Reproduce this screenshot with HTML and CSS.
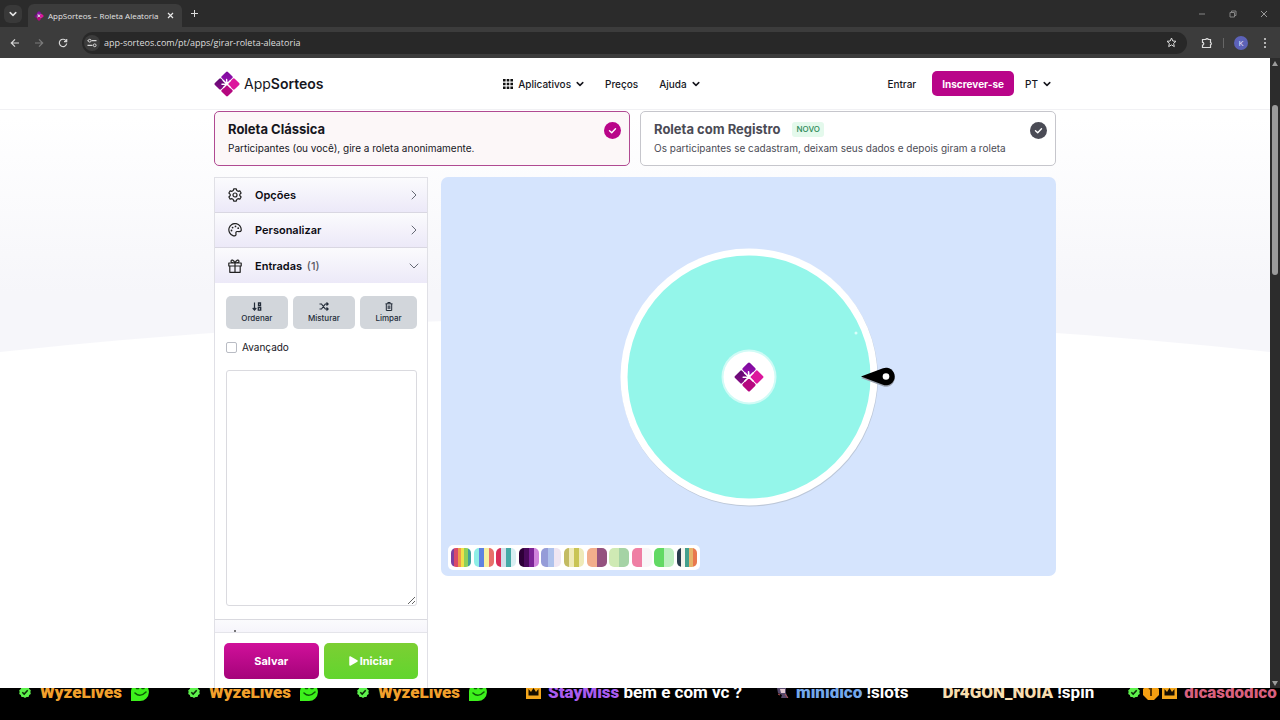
FILE: index.html
```html
<!DOCTYPE html>
<html lang="pt">

<head>
    <meta charset="UTF-8">
    <meta name="viewport" content="width=device-width, initial-scale=1.0">
    <title>AppSorteos – Roleta Aleatoria</title>
    <link rel="stylesheet" href="styles.css">
</head>

<body>

    <!-- Shared icons -->
    <svg class="sprite" aria-hidden="true">
        <defs>
            <linearGradient id="logo-top" x1="0" y1="0" x2="1" y2="1">
                <stop offset="0" stop-color="#7a0a9a" />
                <stop offset="1" stop-color="#9c0fb4" />
            </linearGradient>
            <linearGradient id="logo-left" x1="0" y1="0" x2="1" y2="1">
                <stop offset="0" stop-color="#5c0a70" />
                <stop offset="1" stop-color="#8a0a86" />
            </linearGradient>
        </defs>
        <symbol id="logo" viewBox="0 0 26 26">
            <rect x="8.600" y="1.800" width="8.800" height="8.800" rx="1.300" transform="rotate(45 13 6.200)" fill="url(#logo-top)" />
            <rect x="1.800" y="8.600" width="8.800" height="8.800" rx="1.300" transform="rotate(45 6.200 13)" fill="url(#logo-left)" />
            <rect x="15.400" y="8.600" width="8.800" height="8.800" rx="1.300" transform="rotate(45 19.800 13)" fill="#dc169c" />
            <rect x="8.600" y="15.400" width="8.800" height="8.800" rx="1.300" transform="rotate(45 13 19.800)" fill="#b5077f" />
            <path d="M13 13 12.600 8.500M13 13 9.200 9.400M13 13 8 13.200M13 13 16.500 9.500M13 13 9.500 16.500M13 13 16.500 16.500" stroke="#fff" stroke-width="1.400" stroke-linecap="round" />
        </symbol>
        <symbol id="verified" viewBox="0 0 12 12">
            <path d="M6 0l1.600 1.100 1.900 0 .7 1.800L11.800 4.200 11.400 6l.4 1.900-1.600 1.200-.7 1.800-1.900 0L6 12l-1.600-1.100-1.900 0-.7-1.800L.2 7.900.6 6 .2 4.200l1.600-1.300.7-1.800 1.900 0z" fill="#5df14c" />
            <path d="M3.300 6.200l1.900 1.900 3.500-3.800" fill="none" stroke="#0a2a08" stroke-width="1.500" />
        </symbol>
        <symbol id="smile" viewBox="0 0 18 18">
            <path d="M0 18V8a9 9 0 1 1 9 10z" fill="#3df01c" />
            <path d="M4 10q5 5 11-1M5.500 5.500h2M11 5.500h2" fill="none" stroke="#0c5a06" stroke-width="1.500" stroke-linecap="round" />
        </symbol>
        <symbol id="crown" viewBox="0 0 15 14">
            <path d="M0 2h4l3.500-2L11 2h4v12H0z" fill="#f3a61c" />
            <path d="M2.500 10.500V4L5 7l2.500-4L10 7l2.500-3v6.500z" fill="#140c00" />
        </symbol>
        <symbol id="chevron" viewBox="0 0 8 8">
            <path d="M1.200 2.600 4 5.400 6.800 2.600" fill="none" stroke="currentColor" stroke-width="1.500" stroke-linecap="round" stroke-linejoin="round" />
        </symbol>
        <symbol id="arrow" viewBox="0 0 10 10">
            <path d="M3 1l4 4-4 4" fill="none" stroke="#666a75" stroke-linecap="round" stroke-linejoin="round" />
        </symbol>
        <symbol id="check" viewBox="0 0 17 17">
            <circle cx="8.500" cy="8.500" r="8.500" fill="currentColor" />
            <path d="M5.500 8.800l2.200 2 3.800-4" fill="none" stroke="#fff" stroke-width="1.400" stroke-linecap="round" stroke-linejoin="round" />
        </symbol>
    </svg>

    <!-- Browser -->
    <div class="tab-strip">
        <button class="tab-search" aria-label="Pesquisar guias">
            <svg width="8" height="8"><use href="#chevron" /></svg>
        </button>
        <div class="tab">
            <svg width="10" height="10"><use href="#logo" /></svg>
            <span class="tab-title">AppSorteos – Roleta Aleatoria</span>
            <button aria-label="Fechar guia">
                <svg width="7" height="7" viewBox="0 0 7 7"><path d="M1 1l5 5M6 1L1 6" stroke="#e8e8e8" stroke-width="1.200" /></svg>
            </button>
        </div>
        <button class="tab-new" aria-label="Nova guia">
            <svg width="9" height="9" viewBox="0 0 9 9"><path d="M4.500 1v7M1 4.500h7" stroke="#dcdcdc" /></svg>
        </button>
        <div class="window-buttons">
            <button aria-label="Minimizar"><svg width="8" height="8" viewBox="0 0 8 8"><path d="M1 4h6" stroke="#858585" /></svg></button>
            <button aria-label="Restaurar"><svg width="8" height="8" viewBox="0 0 8 8"><path d="M1 2.500h4.500V7H1zM2.500 2.500V1H7v4.500H5.500" fill="none" stroke="#858585" /></svg></button>
            <button aria-label="Fechar"><svg width="8" height="8" viewBox="0 0 8 8"><path d="M1 1l6 6M7 1L1 7" stroke="#999" /></svg></button>
        </div>
    </div>

    <div class="toolbar">
        <button aria-label="Voltar"><svg width="10" height="10" viewBox="0 0 10 10"><path d="M9 5H1.500M5 1.300L1.300 5 5 8.700" fill="none" stroke="#d8d8d8" stroke-width="1.200" /></svg></button>
        <button aria-label="Avançar"><svg width="10" height="10" viewBox="0 0 10 10"><path d="M1 5h7.500M5 1.300L8.700 5 5 8.700" fill="none" stroke="#7b7b7b" stroke-width="1.200" /></svg></button>
        <button aria-label="Recarregar"><svg width="10" height="10" viewBox="0 0 10 10"><path d="M8.200 3A3.700 3.700 0 1 0 8.700 5.500M8.700 1v2.700H6" fill="none" stroke="#d8d8d8" stroke-width="1.200" /></svg></button>
        <div class="address">
            <span class="site-info">
                <svg width="10" height="10" viewBox="0 0 10 10"><path d="M.5 2.700H1M4.500 2.700H9.500M.5 7.300H5.500" fill="none" stroke="#d8d8d8" stroke-width="1.200" /><circle cx="2.700" cy="2.700" r="1.400" fill="none" stroke="#d8d8d8" /><circle cx="7.700" cy="7.300" r="1.400" fill="none" stroke="#d8d8d8" /></svg>
            </span>
            <input type="text" value="app-sorteos.com/pt/apps/girar-roleta-aleatoria" aria-label="Endereço">
            <button aria-label="Favoritar"><svg width="11" height="11" viewBox="0 0 11 11"><path d="M5.500 1l1.300 3 3.200.3-2.400 2.100.7 3.200-2.800-1.700-2.800 1.700.7-3.200L1 4.300 4.200 4z" fill="none" stroke="#dcdcdc" stroke-linejoin="round" /></svg></button>
        </div>
        <div class="toolbar-end">
            <button aria-label="Extensões"><svg width="12" height="12" viewBox="0 0 12 12"><path d="M1.500 2.500h3.300a1.300 1.300 0 0 1 2.500 0h2.200v3a1.200 1.200 0 0 1 0 2.300v2.700h-8V8a1.300 1.300 0 0 0 0-2.600z" fill="none" stroke="#dcdcdc" stroke-width="1.200" /></svg></button>
            <span class="separator"></span>
            <button class="avatar">K</button>
            <button class="menu" aria-label="Menu"><svg width="4" height="12" viewBox="0 0 4 12"><circle cx="2" cy="2" r="1" fill="#dcdcdc" /><circle cx="2" cy="6" r="1" fill="#dcdcdc" /><circle cx="2" cy="10" r="1" fill="#dcdcdc" /></svg></button>
        </div>
    </div>

    <div class="viewport">
        <div class="page">
            <svg class="page-bg" viewBox="0 0 1270 300" preserveAspectRatio="none" aria-hidden="true">
                <defs>
                    <linearGradient id="bg" x1="0" y1="0" x2="0" y2="1">
                        <stop offset="0.200" stop-color="#fff" />
                        <stop offset="0.800" stop-color="#f6f6fa" />
                    </linearGradient>
                </defs>
                <path d="M0 0H1270V294Q635 226 0 294z" fill="url(#bg)" />
            </svg>

            <header class="header">
                <div class="container header-row">
                    <a href="#" class="brand">
                        <svg width="26" height="26"><use href="#logo" /></svg>
                        <span>App<b>Sorteos</b></span>
                    </a>
                    <nav class="nav">
                        <a href="#">
                            <svg width="10" height="10" viewBox="0 0 10 10" fill="#111"><path d="M0 0h2.600v2.600H0zM3.700 0h2.600v2.600H3.700zM7.400 0H10v2.600H7.400zM0 3.700h2.600v2.600H0zM3.700 3.700h2.600v2.600H3.700zM7.400 3.700H10v2.600H7.400zM0 7.400h2.600V10H0zM3.700 7.400h2.600V10H3.700zM7.400 7.400H10V10H7.400z" /></svg>
                            Aplicativos
                            <svg width="8" height="8"><use href="#chevron" /></svg>
                        </a>
                        <a href="#">Preços</a>
                        <a href="#">Ajuda <svg width="8" height="8"><use href="#chevron" /></svg></a>
                    </nav>
                    <div class="account">
                        <a href="#">Entrar</a>
                        <a href="#" class="btn-signup">Inscrever-se</a>
                        <a href="#">PT <svg width="8" height="8"><use href="#chevron" /></svg></a>
                    </div>
                </div>
            </header>

            <main class="container">
                <div class="modes">
                    <button class="mode active">
                        <span class="mode-text">
                            <strong>Roleta Clássica</strong>
                            <span>Participantes (ou você), gire a roleta anonimamente.</span>
                        </span>
                        <svg width="17" height="17"><use href="#check" /></svg>
                    </button>
                    <button class="mode">
                        <span class="mode-text">
                            <strong>Roleta com Registro <em>NOVO</em></strong>
                            <span>Os participantes se cadastram, deixam seus dados e depois giram a roleta</span>
                        </span>
                        <svg width="17" height="17"><use href="#check" /></svg>
                    </button>
                </div>

                <div class="workspace">
                    <aside class="sidebar">
                        <div class="accordion">
                            <button class="section">
                                <svg width="14" height="14" viewBox="0 0 14 14" fill="none" stroke="#222" stroke-width="1.200" stroke-linejoin="round"><path d="M5.700.8h2.600l.5 1.800 1.200.7 1.800-.5 1.300 2.200L11.800 6.300v1.400l1.300 1.300-1.300 2.200-1.800-.5-1.200.7-.5 1.800H5.700l-.5-1.800-1.200-.7-1.800.5L.9 9l1.300-1.300V6.300L.9 5l1.300-2.200 1.800.5 1.200-.7z" /><circle cx="7" cy="7" r="2" /></svg>
                                <span>Opções</span>
                                <svg class="section-arrow" width="10" height="10"><use href="#arrow" /></svg>
                            </button>
                            <button class="section">
                                <svg width="14" height="14" viewBox="0 0 14 14" fill="none" stroke="#222" stroke-width="1.200"><path d="M5 12.600A6.200 6.200 0 1 1 13.200 7.500C12.800 9 11 8.700 9.500 8.500 7.500 8.300 7.800 10 8 11c.3 1.500-1.500 2.200-3 1.600z" /><g fill="#222" stroke="none"><circle cx="3.500" cy="7.500" r=".9" /><circle cx="4.600" cy="4.600" r=".9" /><circle cx="7.500" cy="3.400" r=".9" /><circle cx="10.200" cy="5.200" r=".9" /></g></svg>
                                <span>Personalizar</span>
                                <svg class="section-arrow" width="10" height="10"><use href="#arrow" /></svg>
                            </button>
                            <button class="section open">
                                <svg width="14" height="14" viewBox="0 0 14 14" fill="none" stroke="#222" stroke-width="1.200"><path d="M.8 4h12.400v3H.8zM1.800 7v6.300h10.400V7M7 4v9.300M7 4C6 1 3 0 3 2.300 3 3.500 4 4 7 4c3 0 4-.5 4-1.700C11 0 8 1 7 4z" stroke-linejoin="round" /></svg>
                                <span>Entradas <small>(1)</small></span>
                                <svg class="section-arrow" width="10" height="10"><use href="#arrow" /></svg>
                            </button>
                            <div class="panel">
                                <div class="tools">
                                    <button>
                                        <svg width="10" height="9" viewBox="0 0 10 9" fill="none" stroke="#222b38" stroke-width="1.200"><path d="M2.500.5v7M.7 6l1.800 2 1.800-2" /><path d="M6.500 1h2v2.500h-2zM6.300 5.500h2.400v2.700H6.300z" stroke-width="1.300" /></svg>
                                        Ordenar
                                    </button>
                                    <button>
                                        <svg width="10" height="9" viewBox="0 0 10 9" fill="none" stroke="#222b38" stroke-width="1.200"><path d="M.5 2H2.500L6.300 7H9M.5 7h2L6.300 2H9M7.500.5L9.200 2 7.500 3.500M7.500 5.500L9.200 7 7.500 8.500" /></svg>
                                        Misturar
                                    </button>
                                    <button>
                                        <svg width="10" height="9" viewBox="0 0 10 9" fill="none" stroke="#222b38"><path d="M1.500 1.800h7M3.800 1.500V.5h2.400v1M2.300 2v6.500h5.400V2M4.200 3.500v3.500M5.800 3.500v3.500" /></svg>
                                        Limpar
                                    </button>
                                </div>
                                <label class="advanced"><input type="checkbox"> Avançado</label>
                                <textarea aria-label="Entradas"></textarea>
                            </div>
                            <div class="section">
                                <svg width="14" height="14" viewBox="0 0 14 14" fill="none" stroke="#222" stroke-width="1.200"><path d="M7 0v3M2 13V7.500h3V13M5 13V4h4v9M9 13V9h3v4" /></svg>
                            </div>
                        </div>
                        <div class="actions">
                            <button class="btn-save">Salvar</button>
                            <button class="btn-start">
                                <svg width="9" height="10" viewBox="0 0 9 10"><path d="M1 1l7 4-7 4z" fill="#fff" stroke="#fff" stroke-width="1.500" stroke-linejoin="round" /></svg>
                                Iniciar
                            </button>
                        </div>
                    </aside>

                    <section class="stage">
                        <svg class="wheel" width="258" height="258" viewBox="0 0 258 258">
                            <circle cx="129.500" cy="130" r="128.500" fill="#bcc7d8" />
                            <circle cx="129" cy="129" r="128.500" fill="#fff" />
                            <circle cx="129" cy="129" r="121.500" fill="#94f6ea" />
                            <circle cx="236" cy="85" r="1.500" fill="#d8fffa" />
                            <circle cx="129" cy="129" r="27.500" fill="#d0fbf6" />
                            <circle cx="129" cy="129" r="25.500" fill="#fff" />
                            <use href="#logo" x="114" y="114" width="30" height="30" />
                            <path d="M241 130L263 121.700a8.800 8.800 0 1 1 0 16.600z" fill="#9aa2af" />
                            <path d="M241 128.500L263 120.200a8.800 8.800 0 1 1 0 16.600z" fill="#000" />
                            <circle cx="266" cy="128.500" r="3.300" fill="#fff" />
                        </svg>
                        <div class="palettes" id="palettes"></div>
                    </section>
                </div>
            </main>
        </div>
        <div class="scrollbar">
            <svg width="6" height="5" viewBox="0 0 6 5"><path d="M0 5L3 0l3 5z" fill="#9b9b9b" /></svg>
            <span class="thumb"></span>
            <svg width="6" height="5" viewBox="0 0 6 5"><path d="M0 0l3 5 3-5z" fill="#9b9b9b" /></svg>
        </div>
    </div>

    <!-- Chat ticker -->
    <div class="ticker">
        <span class="msg orange"><svg width="12" height="12"><use href="#verified" /></svg><b>WyzeLives</b><svg width="18" height="18"><use href="#smile" /></svg></span>
        <span class="msg orange"><svg width="12" height="12"><use href="#verified" /></svg><b>WyzeLives</b><svg width="18" height="18"><use href="#smile" /></svg></span>
        <span class="msg orange"><svg width="12" height="12"><use href="#verified" /></svg><b>WyzeLives</b><svg width="18" height="18"><use href="#smile" /></svg></span>
        <span class="msg purple"><svg width="15" height="14"><use href="#crown" /></svg><span><b>StayMiss</b> bem e com vc ?</span></span>
        <span class="msg blue"><svg width="13" height="14" viewBox="0 0 13 14"><path d="M1 3l4-2 5 1v6l2 5H5l1-3-4-2z" fill="#57496b" /><path d="M4 4h5v4H5z" fill="#e2c9d2" /><path d="M9 9l3 4M2 9l2 1" stroke="#b55" /></svg><span><b>minidico</b> !slots</span></span>
        <span class="msg cream"><span><b>Dr4GON_NOIA</b> !spin</span></span>
        <span class="msg pink">
            <span class="badges">
                <svg width="12" height="12"><use href="#verified" /></svg>
                <svg width="16" height="16" viewBox="0 0 16 16"><path d="M5 0h6l5 5v6l-5 5H5l-5-5V5z" fill="#f5a012" /><path d="M6 5l2-1.500V12" fill="none" stroke="#5a3500" stroke-width="2" /></svg>
                <svg width="15" height="14"><use href="#crown" /></svg>
            </span>
            <b>dicasdodico</b>
        </span>
    </div>

    <script>
        const palettes = [
            ['#7b3fa0', '#d94a6a', '#f09a4a', '#f0e04a', '#8fd05a', '#3f9f9a'],
            ['#8eeee6', '#5f83e0', '#f7f0a0', '#e8706a'],
            ['#d92f5a', '#cfe0ea', '#45aaa6', '#d8eef2'],
            ['#2e0038', '#4a0a5c', '#7c2397', '#d084dc'],
            ['#959cd8', '#afc2ec', '#f0e6f2'],
            ['#c3bb62', '#efeab8', '#c9c455', '#efeab8'],
            ['#f2ae8c', '#94527f'],
            ['#cfeab4', '#a5d3a5'],
            ['#ef7fa4', '#f8f6f8'],
            ['#62d964', '#bdefc0'],
            ['#2a3e4e', '#f4f4ec', '#43a08c', '#e6b46a', '#e8784e']
        ];

        const box = document.getElementById('palettes');

        palettes.forEach((colors, i) => {
            const step = 100 / colors.length;
            const stops = colors.map((c, n) => `${c} ${n * step}% ${(n + 1) * step}%`).join(', ');
            const btn = document.createElement('button');
            btn.setAttribute('aria-label', `Paleta ${i + 1}`);
            btn.style.background = `linear-gradient(to right, ${stops})`;
            box.appendChild(btn);
        });
    </script>

</body>

</html>
```
FILE: styles.css
```css
* {
    margin: 0;
    padding: 0;
    box-sizing: border-box;
}

body {
    display: flex;
    flex-direction: column;
    height: 100vh;
    overflow: hidden;
    background-color: #000;
    font-family: Inter, sans-serif;
    color: #16161d;
}

button {
    border: none;
    background: none;
    font-family: inherit;
    color: inherit;
    cursor: pointer;
}

a {
    color: inherit;
    text-decoration: none;
}

svg {
    display: block;
    flex-shrink: 0;
}

.sprite {
    position: absolute;
    width: 0;
    height: 0;
}

/* Browser */
.tab-strip {
    display: flex;
    align-items: center;
    height: 27px;
    padding: 0 12px 0 4px;
    background-color: #2b2b2b;
    color: #e4e4e4;
    font-family: "Open Sans", sans-serif;
    flex-shrink: 0;
}

.tab-search {
    display: flex;
    align-items: center;
    justify-content: center;
    width: 18px;
    height: 18px;
    border-radius: 6px;
    background-color: #393939;
}

.tab {
    display: flex;
    align-items: center;
    align-self: flex-end;
    gap: 4px;
    width: 154px;
    height: 23px;
    margin-left: 6px;
    padding: 0 8px 0 6px;
    border-radius: 6px 6px 0 0;
    background-color: #3c3c3c;
    font-size: 8px;
}

.tab-title {
    flex: 1;
    white-space: nowrap;
}

.tab-new {
    margin-left: 8px;
}

.window-buttons {
    display: flex;
    gap: 23px;
    margin-left: auto;
}

.toolbar {
    display: flex;
    align-items: center;
    gap: 14px;
    height: 31px;
    padding: 0 13px 0 10px;
    background-color: #3c3c3c;
    font-family: "Open Sans", sans-serif;
    flex-shrink: 0;
}

.address {
    display: flex;
    align-items: center;
    flex: 1;
    gap: 4px;
    height: 22px;
    padding: 0 10px 0 2px;
    border-radius: 11px;
    background-color: #282828;
}

.site-info {
    display: flex;
    align-items: center;
    justify-content: center;
    width: 16px;
    height: 16px;
    border-radius: 50%;
    background-color: #3c3c3c;
}

.address input {
    flex: 1;
    border: none;
    background: none;
    color: #dedede;
    font-family: inherit;
    font-size: 9px;
}

.toolbar-end {
    display: flex;
    align-items: center;
    gap: 10px;
}

.separator {
    width: 1px;
    height: 10px;
    background-color: #666;
}

.avatar {
    width: 14px;
    height: 14px;
    border-radius: 50%;
    background-color: #5c62b8;
    color: #e8e8ff;
    font-size: 8px;
    line-height: 14px;
}

.menu {
    margin-left: 5px;
}

.viewport {
    display: flex;
    flex: 1;
    min-height: 0;
    background-color: #fff;
}

.scrollbar {
    display: flex;
    flex-direction: column;
    align-items: center;
    width: 10px;
    padding: 3px 0 2px;
    background-color: #2c2c2c;
}

.thumb {
    width: 6px;
    height: 170px;
    margin-top: 39px;
    margin-bottom: auto;
    border-radius: 3px;
    background-color: #9b9b9b;
}

/* Page */
.page {
    position: relative;
    display: flex;
    flex-direction: column;
    flex: 1;
    overflow: hidden;
}

.page-bg {
    position: absolute;
    top: 0;
    left: 0;
    width: 100%;
    height: 300px;
}

.container {
    width: 100%;
    max-width: 842px;
    margin: 0 auto;
}

.header {
    position: relative;
    background-color: #fff;
    border-bottom: 1px solid #f1f1f4;
}

.header-row {
    display: flex;
    align-items: center;
    justify-content: space-between;
    height: 51px;
    padding-right: 5px;
    font-size: 10px;
    font-weight: 500;
}

.brand {
    display: flex;
    align-items: center;
    gap: 4px;
    font-size: 14px;
    font-weight: 400;
}

.brand b {
    font-weight: 600;
}

.nav,
.account {
    display: flex;
    align-items: center;
}

.nav {
    gap: 21px;
    margin-right: 8px;
}

.nav a,
.account a {
    display: flex;
    align-items: center;
    gap: 5px;
}

.account {
    gap: 11px;
}

.account .btn-signup {
    height: 25px;
    margin-left: 5px;
    padding: 0 10px;
    border-radius: 5px;
    background-color: #b90589;
    color: #fff;
    font-weight: 700;
}

main.container {
    position: relative;
    display: flex;
    flex-direction: column;
    flex: 1;
    min-height: 0;
    gap: 11px;
    padding-top: 1px;
}

.modes {
    display: grid;
    grid-template-columns: 1fr 1fr;
    gap: 10px;
}

.mode {
    display: flex;
    align-items: flex-start;
    justify-content: space-between;
    height: 55px;
    padding: 10px 8px 0 13px;
    border: 1px solid #c6c6cc;
    border-radius: 5px;
    background-color: #fff;
    color: #4b4b55;
    text-align: left;
}

.mode.active {
    border-color: #b04a92;
    background-color: #fcf7f8;
    color: #16161d;
}

.mode-text {
    display: flex;
    flex-direction: column;
    gap: 4px;
    font-size: 10px;
    line-height: 14px;
}

.mode-text strong {
    display: flex;
    align-items: center;
    gap: 12px;
    font-size: 13px;
    font-weight: 700;
    line-height: 15px;
}

.mode-text em {
    padding: 0 4px;
    border-radius: 3px;
    background-color: #e4f9ec;
    color: #2c8a58;
    font-size: 8px;
    font-style: normal;
    font-weight: 500;
}

.mode > svg {
    color: #4a4b55;
}

.mode.active > svg {
    color: #b90589;
}

.workspace {
    display: grid;
    grid-template-columns: 214px 1fr;
    grid-template-rows: minmax(0, 1fr);
    gap: 13px;
    flex: 1;
    min-height: 0;
}

.sidebar {
    display: flex;
    flex-direction: column;
    border: 1px solid #e0e0e6;
    border-bottom: none;
    background-color: #fff;
}

.accordion {
    flex: 1;
    min-height: 0;
    overflow: hidden;
}

.section {
    display: flex;
    align-items: center;
    gap: 13px;
    width: 100%;
    height: 35px;
    padding: 0 8px 0 13px;
    border-bottom: 1px solid #d9d7e2;
    background: linear-gradient(#fbfbfd, #ece9f8);
    color: #0c0c12;
    font-size: 11px;
    font-weight: 600;
    text-align: left;
}

.section.open {
    border-bottom: none;
}

.section small {
    margin-left: 2px;
    color: #5c5c66;
    font-size: 11px;
    font-weight: 500;
}

.section-arrow {
    margin-left: auto;
}

.section.open .section-arrow {
    transform: rotate(90deg);
}

.panel {
    padding: 13px 10px 13px 11px;
    border-bottom: 1px solid #d9d9df;
}

.tools {
    display: flex;
    gap: 5px;
}

.tools button {
    display: flex;
    flex-direction: column;
    align-items: center;
    justify-content: center;
    flex: 1 1 auto;
    gap: 2px;
    height: 33px;
    border-radius: 5px;
    background-color: #d2d6db;
    color: #222b38;
    font-size: 8px;
    font-weight: 500;
}

.advanced {
    display: flex;
    align-items: center;
    gap: 5px;
    margin: 12px 0 16px;
    font-size: 10px;
    line-height: 13px;
}

.advanced input {
    width: 11px;
    height: 11px;
    appearance: none;
    border: 1px solid #b9bcc4;
    border-radius: 2px;
    background-color: #fff;
}

textarea {
    display: block;
    width: 100%;
    height: 236px;
    border: 1px solid #dadadf;
    border-radius: 3px;
    resize: vertical;
}

.actions {
    display: flex;
    gap: 5px;
    padding: 10px 9px 9px;
    border-top: 1px solid #e4e4ea;
}

.actions button {
    display: flex;
    align-items: center;
    justify-content: center;
    flex: 1;
    gap: 2px;
    height: 36px;
    border-radius: 5px;
    color: #fff;
    font-size: 11px;
    font-weight: 700;
}

.btn-save {
    background: linear-gradient(#d0109a, #a5037a);
}

.btn-start {
    background: linear-gradient(#7ccf33, #62d52e);
}

.stage {
    position: relative;
    display: flex;
    align-items: center;
    justify-content: center;
    height: 399px;
    border-radius: 7px;
    background-color: #d5e4fd;
}

.wheel {
    overflow: visible;
}

.palettes {
    position: absolute;
    left: 7px;
    bottom: 6px;
    display: flex;
    justify-content: space-between;
    width: 252px;
    padding: 3px;
    border-radius: 5px;
    background-color: #fff;
}

.palettes button {
    width: 20px;
    height: 19px;
    border-radius: 5px;
}

/* Ticker */
.ticker {
    display: flex;
    gap: 34px;
    height: 32px;
    padding-left: 19px;
    overflow: hidden;
    flex-shrink: 0;
    background-color: #000;
    color: #fff;
    font-family: Roboto, sans-serif;
    font-size: 17px;
    font-weight: 700;
    line-height: 8px;
    white-space: nowrap;
}

.msg {
    display: flex;
    align-items: center;
    gap: 7px;
    height: 8px;
}

.msg.orange {
    gap: 9px;
    margin-right: 5px;
}

.badges {
    display: flex;
    align-items: center;
    gap: 3px;
}

.orange b {
    color: #f2a02c;
}

.purple b {
    color: #a95cf0;
}

.blue b {
    color: #74a8ec;
}

.cream b {
    color: #f8deb0;
}

.pink b {
    color: #d8607e;
}
```
